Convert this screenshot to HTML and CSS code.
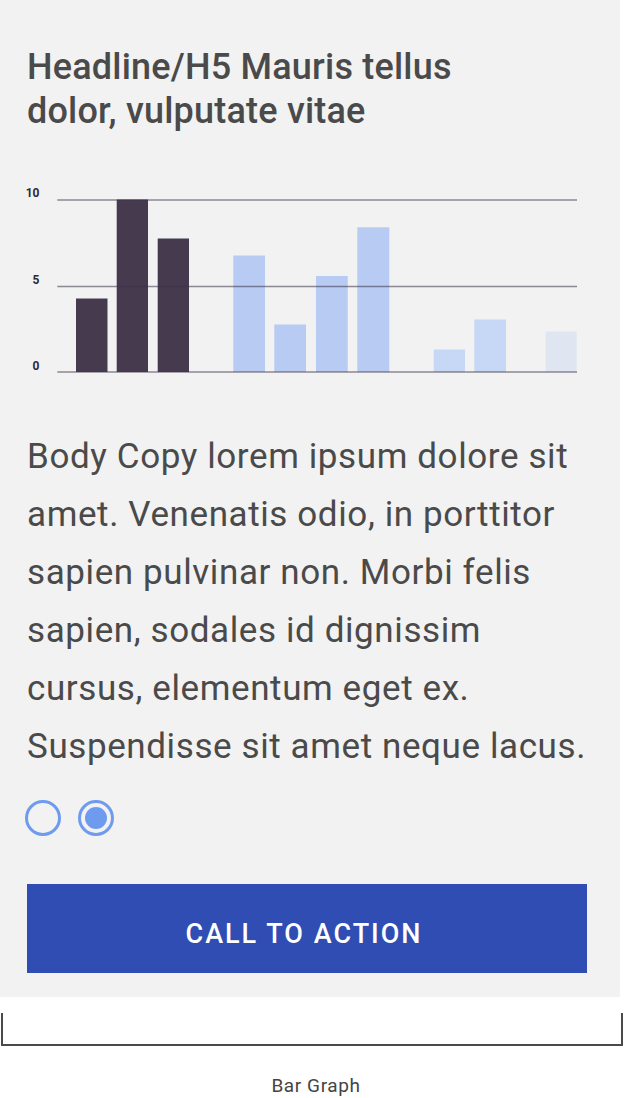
FILE: index.html
```html
<!DOCTYPE html>
<html lang="en">
<head>
<meta charset="utf-8">
<title>Bar Graph</title>
<link rel="stylesheet" href="styles.css">
</head>
<body>
<main class="panel">
  <h1 class="headline">Headline/H5 Mauris tellus dolor, vulputate vitae</h1>
  <svg class="chart" width="600" height="200" viewBox="27 180 600 200" aria-label="Bar chart">
    <g class="labels">
      <text x="39.5" y="197">10</text>
      <text x="39.5" y="283.5">5</text>
      <text x="39.5" y="369.5">0</text>
    </g>
    <g class="bars">
      <rect class="dark" x="76" y="298.5" width="31.5" height="73.5"/>
      <rect class="dark" x="116.7" y="199.5" width="31.3" height="172.5"/>
      <rect class="dark" x="157.7" y="238.5" width="31.3" height="133.5"/>
      <rect class="blue" x="233.3" y="255.5" width="31.7" height="116.5"/>
      <rect class="blue" x="274.3" y="324.5" width="31.7" height="47.5"/>
      <rect class="blue" x="316" y="276" width="31.7" height="96"/>
      <rect class="blue" x="357.3" y="227.3" width="32" height="144.7"/>
      <rect class="pale" x="433.7" y="349.5" width="31.3" height="22.5"/>
      <rect class="pale" x="474.3" y="319.5" width="31.7" height="52.5"/>
      <rect class="faint" x="545.7" y="331.5" width="31" height="40.5"/>
    </g>
    <g class="grid">
      <line x1="57.3" y1="200" x2="577" y2="200"/>
      <line x1="57.3" y1="286.5" x2="577" y2="286.5"/>
      <line x1="57.3" y1="372" x2="577" y2="372"/>
    </g>
  </svg>
  <p class="body-copy">Body Copy lorem ipsum dolore sit amet. Venenatis odio, in porttitor sapien pulvinar non. Morbi felis sapien, sodales id dignissim cursus, elementum eget ex. Suspendisse sit amet neque lacus.</p>
  <div class="radios">
    <span class="radio"></span>
    <span class="radio checked"></span>
  </div>
  <button class="cta" type="button">CALL TO ACTION</button>
</main>
<div class="bracket"></div>
<p class="caption">Bar Graph</p>
</body>
</html>
```

FILE: styles.css
```css
html, body {
  margin: 0;
  padding: 0;
  background: #ffffff;
}

body {
  width: 624px;
  font-family: Roboto, "Liberation Sans", sans-serif;
  color: #4a4a4a;
}

.panel {
  width: 620px;
  height: 997px;
  box-sizing: border-box;
  background: #f2f2f2;
  padding: 45px 33px 0 27px;
  display: flex;
  flex-direction: column;
  align-items: flex-start;
}

.headline {
  margin: 0;
  width: 470px;
  font-size: 36px;
  line-height: 44px;
  font-weight: 500;
  letter-spacing: 0.2px;
  color: #4a4a4a;
}

.chart {
  display: block;
  margin-top: 47px;
  overflow: visible;
}

.labels text {
  font-family: Roboto, "Liberation Sans", sans-serif;
  font-size: 12px;
  font-weight: 700;
  fill: #2e2838;
  text-anchor: end;
}

.bars .dark { fill: #463a4f; }
.bars .blue { fill: #b8cbf2; }
.bars .pale { fill: #c7d7f6; }
.bars .faint { fill: #e0e5f2; }

.grid line {
  stroke: rgba(60, 50, 72, 0.55);
  stroke-width: 1.6;
}

.body-copy {
  margin: 48px 0 0 0;
  width: 566px;
  font-size: 35px;
  line-height: 58px;
  letter-spacing: 0.6px;
  color: #4a4a4a;
}

.radios {
  margin-top: 24px;
  margin-left: -2px;
  display: flex;
  gap: 17px;
}

.radio {
  width: 36px;
  height: 36px;
  box-sizing: border-box;
  border: 3px solid #6f9bef;
  border-radius: 50%;
  display: flex;
  align-items: center;
  justify-content: center;
}

.radio.checked::after {
  content: "";
  width: 22px;
  height: 22px;
  border-radius: 50%;
  background: #6f9bef;
}

.cta {
  margin-top: 48px;
  width: 560px;
  height: 89px;
  border: none;
  background: #2f4db3;
  color: #ffffff;
  font-family: Roboto, "Liberation Sans", sans-serif;
  font-size: 27px;
  font-weight: 500;
  letter-spacing: 2px;
  padding: 10px 6px 0 0;
}

.bracket {
  margin: 16px 0 0 1px;
  width: 622px;
  height: 33px;
  box-sizing: border-box;
  border: 2px solid #4a4a4a;
  border-top: none;
}

.caption {
  margin: 29px 0 0 0;
  padding-left: 8px;
  text-align: center;
  font-size: 19px;
  line-height: 21px;
  letter-spacing: 0.6px;
  color: #444444;
}
```
